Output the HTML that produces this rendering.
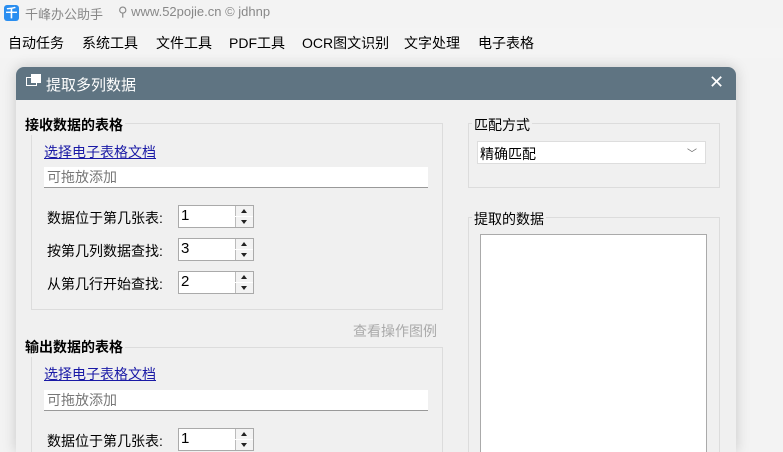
<!DOCTYPE html>
<html><head><meta charset="utf-8"><style>
*{margin:0;padding:0;box-sizing:border-box}
html,body{width:783px;height:452px;overflow:hidden}
body{background:#f3f3f3;font-family:"Liberation Sans","Noto Sans CJK SC",sans-serif;position:relative;font-size:14px;color:#000}
.a{position:absolute;white-space:nowrap}
.dlg{position:absolute;left:16px;top:67px;width:720px;height:385px;background:#f0f0f0;border-radius:8px 8px 0 0;overflow:hidden;box-shadow:0 0 14px rgba(0,0,0,.18)}
.tb{position:absolute;left:0;top:0;width:720px;height:33px;background:#5f7482}
.grp{position:absolute;border:1px solid #dcdcdc}
.lbl{position:absolute;background:#f0f0f0;padding:0 2px}
.in{position:absolute;background:#fff;border-bottom:1px solid #999;color:#777;padding-left:3px;font-size:14px;line-height:20px}
.lnk{color:#1a1aa6;text-decoration:underline}
.sp{position:absolute;width:76px;height:23px;border:1px solid #aaa;background:#fff}
.sp span{position:absolute;left:2px;top:1px;font-size:15px}
.sp i{position:absolute;right:0;width:18px;height:10px;border-left:1px solid #bbb;background:#f3f3f3}
.sp i.u{top:0}.sp i.d{top:11px}
.sp i.u:after{content:"";position:absolute;left:5px;top:3px;border:3.5px solid transparent;border-bottom:4px solid #222;border-top:0}
.sp i.d:after{content:"";position:absolute;left:5px;top:3px;border:3.5px solid transparent;border-top:4px solid #222;border-bottom:0}
</style></head><body>
<div class="a" style="left:4px;top:5px;width:15px;height:16px;background:#2a8ef0;border-radius:3px;color:#fff;font-size:12px;text-align:center;line-height:16px;font-weight:bold">千</div>
<div class="a" style="left:25px;top:4px;color:#888;font-size:13px">千峰办公助手</div>
<div class="a" style="left:118px;top:4px;color:#888;font-size:13px">⚲ www.52pojie.cn © jdhnp</div>
<div class="a" style="left:0;top:28px;width:783px;height:30px;background:#f4f4f4"></div>
<div class="a" style="left:8px;top:33px">自动任务</div>
<div class="a" style="left:82px;top:33px">系统工具</div>
<div class="a" style="left:156px;top:33px">文件工具</div>
<div class="a" style="left:229px;top:33px">PDF工具</div>
<div class="a" style="left:302px;top:33px">OCR图文识别</div>
<div class="a" style="left:404px;top:33px">文字处理</div>
<div class="a" style="left:478px;top:33px">电子表格</div>

<div class="dlg">
<div class="tb"></div>
<div class="a" style="left:10px;top:10px;width:11px;height:9px;border:1.5px solid #fff"></div>
<div class="a" style="left:15px;top:7px;width:10px;height:9px;background:#fff"></div>
<div class="a" style="left:30px;top:7px;color:#fff;font-size:15px">提取多列数据</div>
<div class="a" style="left:693px;top:5px;color:#fff;font-size:18px;font-weight:300">✕</div>

<div class="grp" style="left:15px;top:56px;width:412px;height:187px"></div>
<div class="lbl" style="left:7px;top:48px;font-weight:bold">接收数据的表格</div>
<div class="a lnk" style="left:28px;top:75px">选择电子表格文档</div>
<div class="in" style="left:28px;top:100px;width:384px;height:21px">可拖放添加</div>
<div class="a" style="left:31px;top:141px">数据位于第几张表:</div>
<div class="sp" style="left:162px;top:138px"><span>1</span><i class="u"></i><i class="d"></i></div>
<div class="a" style="left:31px;top:174px">按第几列数据查找:</div>
<div class="sp" style="left:162px;top:171px"><span>3</span><i class="u"></i><i class="d"></i></div>
<div class="a" style="left:31px;top:207px">从第几行开始查找:</div>
<div class="sp" style="left:162px;top:204px"><span>2</span><i class="u"></i><i class="d"></i></div>

<div class="a" style="left:337px;top:254px;color:#aaa">查看操作图例</div>

<div class="grp" style="left:15px;top:280px;width:412px;height:150px"></div>
<div class="lbl" style="left:7px;top:270px;font-weight:bold">输出数据的表格</div>
<div class="a lnk" style="left:28px;top:297px">选择电子表格文档</div>
<div class="in" style="left:28px;top:323px;width:384px;height:21px">可拖放添加</div>
<div class="a" style="left:31px;top:364px">数据位于第几张表:</div>
<div class="sp" style="left:162px;top:361px"><span>1</span><i class="u"></i><i class="d"></i></div>

<div class="grp" style="left:452px;top:56px;width:252px;height:65px"></div>
<div class="lbl" style="left:456px;top:48px">匹配方式</div>
<div class="a" style="left:461px;top:74px;width:229px;height:23px;background:#fff;border:1px solid #ddd;padding:2px 2px">精确匹配<span style="position:absolute;right:8px;top:3px;color:#666;font-size:10px">﹀</span></div>

<div class="grp" style="left:452px;top:150px;width:252px;height:260px"></div>
<div class="lbl" style="left:456px;top:142px">提取的数据</div>
<div class="a" style="left:464px;top:167px;width:227px;height:250px;background:#fff;border:1px solid #aaa"></div>
</div>
</body></html>
